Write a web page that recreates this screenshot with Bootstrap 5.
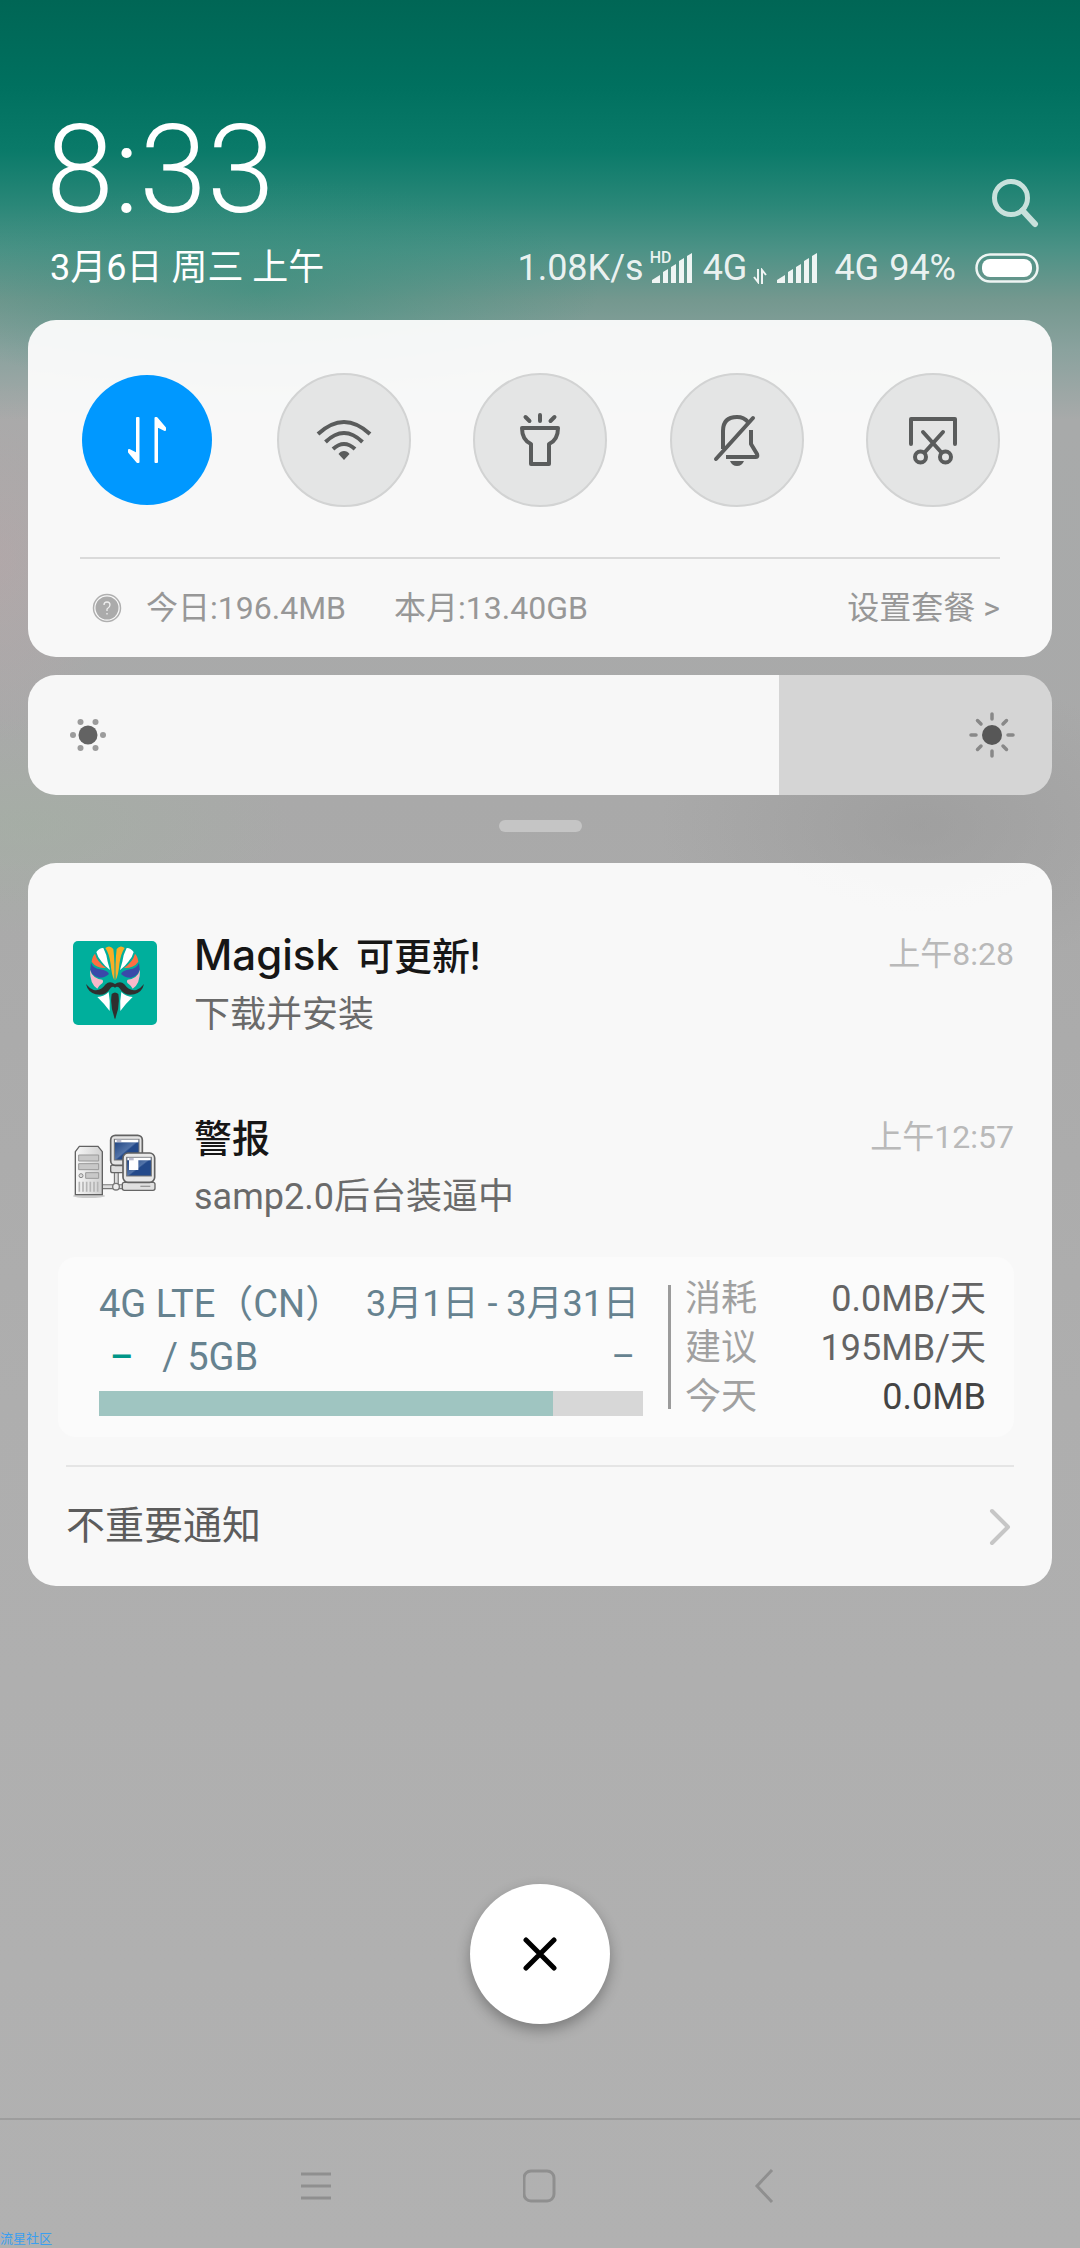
<!DOCTYPE html>
<html lang="zh-CN">
<head>
<meta charset="utf-8">
<meta name="viewport" content="width=device-width, initial-scale=1">
<title>通知</title>
<link href="https://cdn.jsdelivr.net/npm/bootstrap@5.3.0/dist/css/bootstrap.min.css" rel="stylesheet">
<style>
  body {
    font-family: Roboto, "Noto Sans CJK SC", sans-serif;
    font-weight: 400;
    font-size: 36px;
    background:
      radial-gradient(ellipse 340px 110px at 260px 290px, rgba(40,140,120,.5), transparent),
      radial-gradient(ellipse 110px 180px at 0 560px, rgba(190,165,168,.4), transparent),
      radial-gradient(ellipse 260px 110px at 30px 825px, rgba(160,180,160,.4), transparent),
      radial-gradient(ellipse 260px 150px at 920px 825px, rgba(150,150,150,.5), transparent),
      linear-gradient(#006655 0, #00705f 85px, #0a7a69 150px, #2a8778 205px, #4c9286 250px, #74988f 300px, #8aa29e 350px, #a8aaaa 420px, #a9a9a9 800px, #aeaeae 1400px, #b1b1b1 100%);
  }
  .clock { font-size: 122px; line-height: 130px; font-weight: 300; color: #fff; }
  .head { padding: 106px 40px 32px 46px; }
  .head-line { height: 40px; margin-top: 12px; line-height: 40px; color: #fff; }
  .date { padding-left: 4px; }
  .status { color: rgba(255,255,255,.9); }
  .search { color: #c8e1dc; margin-bottom: 8px; }
  .hd { top: -3px; left: -2px; font-size: 16px; line-height: 16px; font-weight: 500; }
  .gap-s { margin-right: 6px; }
  .gap-m { margin-right: 10px; }
  .gap-l { margin-right: 18px; }
  .shell { padding: 0 28px; }
  .panel { background: rgba(252,252,252,.95); border-radius: 28px; }
  .quick { padding: 53px 52px 0; }
  .tog { width: 134px; height: 134px; border: 2px solid #d2d3d3; background: #e4e5e5; color: #5a5c5c; }
  .tog-on { background: #0098ff; background-clip: padding-box; border-color: transparent; color: #fff; }
  .rule { height: 2px; background: #dadada; margin-top: 50px; }
  .usage { height: 98px; font-size: 32px; color: #979797; padding-left: 12px; }
  .usage a { color: inherit; }
  .help { width: 30px; height: 30px; margin-right: 24px; }
  .bright { height: 120px; margin-top: 18px; }
  .bright input { -webkit-appearance: none; appearance: none; border-radius: 28px; background: linear-gradient(90deg, #f7f7f7 var(--level), #d5d5d5 var(--level)); }
  .bright input::-webkit-slider-thumb { -webkit-appearance: none; width: 1px; height: 120px; background: transparent; }
  .dim { left: 40px; } .full { right: 36px; }
  .dim, .full { top: 0; bottom: 0; margin: auto 0; pointer-events: none; }
  .grip-wrap { height: 68px; padding-top: 25px; }
  .grip { width: 83px; height: 12px; border-radius: 6px; background: #c5c5c5; }
  .notes { padding-top: 28px; }
  .note { height: 183px; padding: 0 38px 0 45px; line-height: 58px; gap: 37px; }
  .note-body { padding-top: 4px; }
  .note-title { font-size: 38px; line-height: 58px; font-weight: 500; color: #161616; }
  .latin { font-family: Inter, sans-serif; font-size: 42px; margin-right: 6px; }
  .note-text { color: #6a6a6a; }
  .note-time { font-size: 32px; color: #b9b9b9; padding-top: 34px; }
  .plan { margin: 0 38px 0 30px; padding: 18px 28px 15px 41px; background: #fbfbfb; border-radius: 18px; }
  .plan-main { line-height: 53px; color: #66828f; padding-top: 3px; }
  .plan-name { font-size: 38px; }
  .used { color: #009688; font-weight: 500; margin: 0 29px 0 11px; }
  .meter { height: 25px; margin-top: 7px; background: #d7d7d7; }
  .meter .progress-bar { background: #9fc5c1; }
  .bar-v { width: 3px; height: 124px; background: #9b9b9b; margin: 10px 14px 0 25px; }
  .stats { width: 301px; line-height: 49px; color: #a0a0a0; }
  .stats dt, .stats dd { font-weight: 400; margin: 0; }
  .stats dd { color: #646464; }
  .stats .today { color: #444; }
  .inner-rule { height: 2px; background: #e5e5e5; margin: 28px 38px 0; }
  .minor { height: 119px; padding: 0 41px 0 38px; font-size: 39px; color: #5c5c5c; }
  .clear { width: 140px; height: 140px; margin-top: 298px; box-shadow: 0 6px 14px rgba(0,0,0,.3); }
  .keys { height: 130px; border-top: 2px solid #9d9d9d; padding-top: 3px; }
  .keys button { width: 224px; color: #8f8f8f; }
  .mark-txt { font-size: 13px; line-height: 18px; color: #3b9ff0; }
</style>
<script src="https://cdn.jsdelivr.net/npm/bootstrap@5.3.0/dist/js/bootstrap.bundle.min.js"></script>
</head>
<body class="min-vh-100 d-flex flex-column position-relative overflow-x-hidden">

<header class="head">
  <div class="d-flex justify-content-between align-items-end">
    <div class="clock">8:33</div>
    <button class="search btn p-0 border-0 d-flex" aria-label="搜索">
      <svg width="50" height="50" viewBox="0 0 50 50" fill="none" stroke="currentColor" stroke-linecap="round"><circle cx="21" cy="20" r="16.500" stroke-width="5"/><path d="M32.500 32.500 45 46" stroke-width="6"/></svg>
    </button>
  </div>
  <div class="head-line d-flex justify-content-between align-items-center text-nowrap">
    <div class="date">3月6日 周三 上午</div>
    <div class="status d-flex align-items-center">
      <span>1.08K/s</span>
      <span class="position-relative d-flex gap-m ms-2">
        <span class="hd position-absolute">HD</span>
        <svg width="41" height="30" viewBox="0 0 41 30" fill="currentColor"><path d="M0 30v-3l8-5v8zM11 30V19l5-3v14zM19 30V14l5-3v19zM27 30V8l5-3v25zM35 30V3l5-3v30z"/></svg>
      </span>
      <span class="gap-s">4G</span>
      <svg class="gap-m align-self-end mb-1" width="14" height="16" viewBox="0 0 14 16" fill="none" stroke="currentColor" stroke-width="2"><path d="M5 1v13L1 9M9 16V2l4 5"/></svg>
      <svg class="me-3" width="41" height="30" viewBox="0 0 41 30" fill="currentColor"><path d="M0 30v-3l8-5v8zM11 30V19l5-3v14zM19 30V14l5-3v19zM27 30V8l5-3v25zM35 30V3l5-3v30z"/></svg>
      <span class="gap-m">4G</span>
      <span class="gap-l">94%</span>
      <svg width="66" height="30" viewBox="0 0 66 30"><rect x="2.500" y="1.500" width="61" height="27" rx="13.500" fill="none" stroke="#eef5f3" stroke-width="2.500"/><rect x="8" y="6" width="50" height="18" rx="8" fill="#fff"/></svg>
    </div>
  </div>
</header>

<main class="shell flex-grow-1 d-flex flex-column">
  <section class="panel quick">
    <div class="d-flex justify-content-between">
      <button class="tog tog-on btn rounded-circle p-0 d-flex align-items-center justify-content-center" aria-label="移动数据">
        <svg width="56" height="56" viewBox="0 0 56 56" fill="currentColor" stroke="currentColor" stroke-width="2" stroke-linejoin="round"><path d="M18 6h1.500v44h-1L10 40v-2l8 4zM38 50h-1.500V6h1L46 16v2l-8-4z"/></svg>
      </button>
      <button class="tog btn rounded-circle p-0 d-flex align-items-center justify-content-center" aria-label="WLAN">
        <svg width="56" height="56" viewBox="0 0 56 56" fill="none" stroke="currentColor" stroke-width="4"><path d="M2 22Q28-2 54 22M9.500 30Q28 12 46.500 30M17 37Q28 27 39 37"/><path d="M28 39q3.500 0 5.500 3L28 48l-5.500-6q2-3 5.500-3z" fill="currentColor" stroke="none"/></svg>
      </button>
      <button class="tog btn rounded-circle p-0 d-flex align-items-center justify-content-center" aria-label="手电筒">
        <svg width="56" height="56" viewBox="0 0 56 56" fill="none" stroke="currentColor" stroke-width="4" stroke-linecap="round" stroke-linejoin="round"><path d="M10 16h36q0 12-9 16v20H19V32q-9-4-9-16zM28 3v6M13.500 5l4 4M42.500 5l-4 4"/></svg>
      </button>
      <button class="tog btn rounded-circle p-0 d-flex align-items-center justify-content-center" aria-label="静音">
        <svg width="56" height="56" viewBox="0 0 56 56" fill="none" stroke="currentColor" stroke-width="4" stroke-linecap="round" stroke-linejoin="round"><path d="M7 47 44 6"/><path d="M14 37V19Q14 5 28 5q7 0 11 5M42 18v14l6 10q1 3-1 3H17" stroke-linecap="butt"/><path d="M21 49h14q-2 5-7 5t-7-5z" fill="currentColor" stroke="none"/></svg>
      </button>
      <button class="tog btn rounded-circle p-0 d-flex align-items-center justify-content-center" aria-label="截屏">
        <svg width="56" height="56" viewBox="0 0 56 56" fill="none" stroke="currentColor" stroke-width="4" stroke-linecap="round" stroke-linejoin="round"><path d="M6 32V7h44v25M18 20l18 20M38 20 20 40"/><circle cx="15.500" cy="45" r="5.500"/><circle cx="40.500" cy="45" r="5.500"/></svg>
      </button>
    </div>
    <div class="rule"></div>
    <div class="usage d-flex align-items-center text-nowrap">
      <svg class="help" viewBox="0 0 30 30"><circle cx="15" cy="15" r="13.500" fill="none" stroke="#b0b0b0" stroke-width="1.500"/><circle cx="15" cy="15" r="11.500" fill="#ababab"/><path d="M12 12q0-3 3-3t3 3q0 2-3 4v2M15 20v1.500" fill="none" stroke="#eee" stroke-width="1.300"/></svg>
      <span class="me-5">今日:196.4MB</span>
      <span>本月:13.40GB</span>
      <a class="ms-auto text-decoration-none" href="#plan">设置套餐 &gt;</a>
    </div>
  </section>

  <div class="bright position-relative" style="--level:73.3%">
    <input class="d-block w-100 h-100 m-0" id="level" type="range" min="0" max="1000" value="733">
    <label class="dim position-absolute d-flex align-items-center" for="level" aria-label="亮度"><svg width="40" height="40" viewBox="-20 -20 40 40"><circle r="9.500" fill="#636363"/><g fill="#9c9c9c"><circle cx="-15" r="3"/><circle cx="15" r="3"/><circle cx="-7.500" cy="-13" r="3"/><circle cx="7.500" cy="-13" r="3"/><circle cx="-7.500" cy="13" r="3"/><circle cx="7.500" cy="13" r="3"/></g></svg></label>
    <svg class="full position-absolute" width="48" height="48" viewBox="-24 -24 48 48"><circle r="10" fill="#575757"/><path d="M0-21v5M0 21v-5M-21 0h5M21 0h-5M-14.500-14.500l3.500 3.500M14.500-14.500 11-11M-14.500 14.500l3.500-3.500M14.500 14.500 11 11" stroke="#888" stroke-width="3.500" stroke-linecap="round"/></svg>
  </div>

  <div class="grip-wrap d-flex justify-content-center"><button class="grip btn p-0 border-0" aria-label="展开"></button></div>

  <section class="panel notes">
    <article class="note d-flex align-items-center">
      <svg class="flex-shrink-0" width="84" height="84" viewBox="0 0 252 252">
        <rect width="252" height="252" rx="15" fill="#00af9c"/>
        <defs><g id="half">
          <path d="M97 21Q110 10 121 24 126 66 124 118 116 104 113 70 109 38 97 21z" fill="#f9ae27"/>
          <path d="M70 33Q80 20 91 21 102 42 104 62L111 87Q96 76 86 62 74 50 70 33z" fill="#fff"/>
          <path d="M56 62Q58 45 66 38 72 62 99 81 70 82 56 62z" fill="#ff6f42"/>
          <path d="M54 66Q62 84 82 85 103 88 108 99 96 111 78 110 57 104 52 86z" fill="#3a49a9"/>
          <path d="M51 86Q58 112 88 116 94 122 84 130 76 136 73 143 50 128 51 86z" fill="#f8b9ca"/>
          <path d="M127 130Q110 117 98 130 82 152 62 147 49 142 39 129 44 153 68 160 98 166 111 143 117 134 127 140z" fill="#2f2f2f"/>
          <path d="M73 168Q94 166 107 153 112 180 110 210 94 188 73 168z" fill="#fff"/>
        </g></defs>
        <use href="#half"/><use href="#half" transform="matrix(-1 0 0 1 252 0)"/>
        <path d="M116 159Q126 150 136 159 142 196 126 235 110 196 116 159z" fill="#2f2f2f"/>
      </svg>
      <div class="note-body flex-grow-1 text-nowrap">
        <div class="note-title"><span class="latin">Magisk </span>可更新!</div>
        <div class="note-text">下载并安装</div>
      </div>
      <time class="note-time align-self-start">上午8:28</time>
    </article>

    <article class="note d-flex align-items-center">
      <svg class="flex-shrink-0" width="84" height="66" viewBox="0 0 252 198">
        <defs>
          <linearGradient id="scr" x2="1" y2="1"><stop stop-color="#1b3f7c"/><stop offset=".5" stop-color="#5273a8"/><stop offset=".55" stop-color="#23498a"/></linearGradient>
          <linearGradient id="twr" x2="1"><stop stop-color="#f7f7f7"/><stop offset="1" stop-color="#d0d0d0"/></linearGradient>
        </defs>
        <ellipse cx="48" cy="189" rx="48" ry="6" fill="#ccc"/>
        <path d="M88 161h62M130 118v42" stroke="#777" stroke-width="15"/><path d="M88 161h62M130 118v42" stroke="#ddd" stroke-width="8"/>
        <circle cx="129" cy="161" r="10" fill="#eee" stroke="#777" stroke-width="4"/>
        <path d="M19 40h56l13 16v129H7V56z" fill="url(#twr)" stroke="#626262" stroke-width="4"/>
        <path d="M17 66h60v18H17zM17 92h60v18H17zM38 119h39v17H38z" fill="#c8c8c8" stroke="#999" stroke-width="3"/>
        <circle cx="24" cy="128" r="6" fill="#ddd" stroke="#888" stroke-width="3"/>
        <path d="M19 146v30M30 146v30M41 146v30M52 146v30M63 146v30M74 146v30" stroke="#b5b5b5" stroke-width="5"/>
        <rect x="113" y="96" width="90" height="23" rx="6" fill="#ddd" stroke="#666" stroke-width="4"/>
        <rect x="113" y="7" width="95" height="90" rx="14" fill="#e4e4e4" stroke="#626262" stroke-width="5"/>
        <rect x="124" y="19" width="74" height="62" fill="url(#scr)" stroke="#777" stroke-width="3"/><path d="M126 20h70v8h-70z" fill="#fff"/><path d="M131 20h14v7h-14z" fill="#bbc"/>
        <rect x="148" y="148" width="98" height="24" rx="6" fill="#e0e0e0" stroke="#666" stroke-width="4"/><path d="M202 160h30" stroke="#999" stroke-width="4"/>
        <rect x="150" y="60" width="95" height="88" rx="15" fill="#e8e8e8" stroke="#626262" stroke-width="5"/>
        <rect x="161" y="73" width="74" height="56" fill="url(#scr)" stroke="#777" stroke-width="3"/><path d="M163 74h70v8h-70zM168 82h28v29h-28z" fill="#fff"/><path d="M168 75h14v7h-14z" fill="#bbc"/>
      </svg>
      <div class="note-body flex-grow-1 text-nowrap">
        <div class="note-title">警报</div>
        <div class="note-text">samp2.0后台装逼中</div>
      </div>
      <time class="note-time align-self-start">上午12:57</time>
    </article>

    <div class="plan d-flex text-nowrap" id="plan">
      <div class="plan-main flex-grow-1">
        <div class="d-flex justify-content-between"><span class="plan-name">4G LTE（CN）</span><span class="pe-1">3月1日 - 3月31日</span></div>
        <div class="d-flex"><span class="used">–</span><span class="plan-name">/ 5GB</span><span class="ms-auto me-2">–</span></div>
        <div class="meter progress rounded-0" role="progressbar" aria-label="流量" aria-valuenow="83" aria-valuemin="0" aria-valuemax="100"><div class="progress-bar" style="width:83.5%"></div></div>
      </div>
      <div class="bar-v flex-shrink-0"></div>
      <dl class="stats mb-0 flex-shrink-0">
        <div class="d-flex justify-content-between"><dt>消耗</dt><dd>0.0MB/天</dd></div>
        <div class="d-flex justify-content-between"><dt>建议</dt><dd>195MB/天</dd></div>
        <div class="d-flex justify-content-between"><dt>今天</dt><dd class="today">0.0MB</dd></div>
      </dl>
    </div>

    <div class="inner-rule"></div>
    <button class="minor btn border-0 w-100 d-flex align-items-center justify-content-between">
      <span>不重要通知</span>
      <svg width="22" height="38" viewBox="0 0 22 38" fill="none" stroke="#c6c6c6" stroke-width="4" stroke-linecap="round" stroke-linejoin="round"><path d="M3 3l16 16L3 35"/></svg>
    </button>
  </section>

  <button class="clear btn bg-white rounded-circle p-0 border-0 mx-auto d-flex align-items-center justify-content-center" aria-label="清除">
    <svg width="34" height="34" viewBox="0 0 34 34" stroke="#000" stroke-width="5" stroke-linecap="round"><path d="M3 3l28 28M31 3 3 31"/></svg>
  </button>
</main>

<nav class="keys d-flex justify-content-center">
  <button class="btn border-0 p-0" aria-label="菜单"><svg width="32" height="34" viewBox="0 0 32 34" stroke="currentColor" stroke-width="3"><path d="M1 5h30M1 17h30M1 29h30"/></svg></button>
  <button class="btn border-0 p-0" aria-label="主屏幕"><svg width="34" height="34" viewBox="0 0 34 34" fill="none" stroke="currentColor" stroke-width="3"><rect x="1" y="2" width="30" height="30" rx="7"/></svg></button>
  <button class="btn border-0 p-0" aria-label="返回"><svg width="34" height="34" viewBox="0 0 34 34" fill="none" stroke="currentColor" stroke-width="3"><path d="M25 1 10 17l15 16"/></svg></button>
</nav>
<div class="mark-txt position-absolute bottom-0 start-0 pe-none">流星社区</div>
</body>
</html>
